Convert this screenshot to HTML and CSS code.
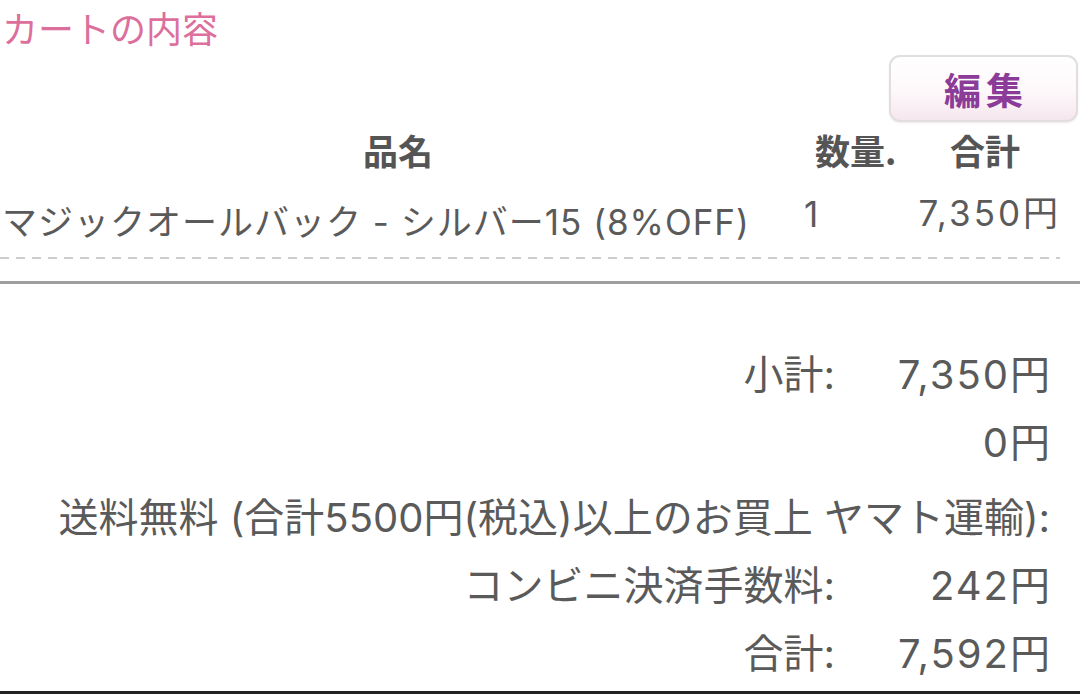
FILE: index.html
```html
<!DOCTYPE html>
<html lang="ja">
<head>
<meta charset="utf-8">
<title>カートの内容</title>
<link rel="stylesheet" href="styles.css">
</head>
<body>
<div class="page">
  <h1 class="title">カートの内容</h1>
  <div class="toolbar"><button class="edit-btn">編集</button></div>
  <div class="cart-head">
    <span class="c-name">品名</span>
    <span class="c-qty">数量.</span>
    <span class="c-total">合計</span>
  </div>
  <div class="cart-row">
    <span class="c-name">マジックオールバック - シルバー15 (8%OFF)</span>
    <span class="c-qty">1</span>
    <span class="c-total">7,350円</span>
  </div>
  <div class="rule"></div>
  <div class="summary">
    <div class="s-row"><span class="s-label">小計:</span><span class="s-value">7,350円</span></div>
    <div class="s-row"><span class="s-label"></span><span class="s-value">0円</span></div>
    <div class="s-row s-wide"><span class="s-label">送料無料 (合計5500円(税込)以上のお買上 ヤマト運輸):</span></div>
    <div class="s-row"><span class="s-label">コンビニ決済手数料:</span><span class="s-value">242円</span></div>
    <div class="s-row"><span class="s-label">合計:</span><span class="s-value">7,592円</span></div>
  </div>
  <div class="bottom-rule"></div>
</div>
</body>
</html>
```
FILE: styles.css
```css
html, body {
  margin: 0;
  padding: 0;
  background: #ffffff;
}
body {
  font-family: Inter, "Noto Sans CJK JP", sans-serif;
  color: #5a5a5a;
  overflow: hidden;
}
.page {
  width: 1080px;
  height: 695px;
  display: flex;
  flex-direction: column;
}
.title {
  margin: 0;
  padding-left: 2px;
  height: 55px;
  line-height: 60px;
  font-size: 36px;
  font-weight: 400;
  color: #dc6f9c;
}
.toolbar {
  height: 67px;
  display: flex;
  justify-content: flex-end;
  padding-right: 2px;
}
.edit-btn {
  width: 189px;
  height: 67px;
  border: 2px solid #e2dde0;
  border-radius: 11px;
  background: linear-gradient(#ffffff 0%, #fdf8fa 55%, #f5e6ee 100%);
  box-shadow: 0 1px 2px rgba(0,0,0,0.08);
  font-family: "Noto Sans CJK JP", sans-serif;
  font-size: 37px;
  font-weight: 700;
  color: #8a3c98;
  letter-spacing: 5px;
  padding: 0 0 0 5px;
}
.cart-head {
  display: grid;
  grid-template-columns: 796px 129px 135px;
  height: 56px;
  line-height: 56px;
  font-size: 35px;
  font-weight: 700;
  font-family: "Noto Sans CJK JP", sans-serif;
  color: #555555;
}
.cart-head .c-name { text-align: center; }
.cart-head .c-qty { text-align: left; padding-left: 19px; }
.cart-head .c-total { text-align: left; padding-left: 25px; }
.cart-row {
  display: grid;
  grid-template-columns: 796px 104px 160px;
  width: 1060px;
  height: 81px;
  font-size: 35px;
  background: repeating-linear-gradient(to right, #cdcdcd 0 9px, transparent 9px 16px) left bottom / 100% 2px no-repeat;
}
.cart-row .c-name {
  padding-left: 2px;
  line-height: 88px;
  white-space: nowrap;
  letter-spacing: 1px;
}
.cart-row .c-qty {
  padding-left: 8px;
  line-height: 72px;
}
.cart-row .c-total {
  text-align: right;
  line-height: 70px;
  white-space: nowrap;
  letter-spacing: 3px;
  margin-right: -1px;
}
.rule {
  margin-top: 22px;
  height: 3px;
  background: #9e9e9e;
}
.summary {
  width: 1050px;
  padding-top: 57px;
  display: flex;
  flex-direction: column;
  font-size: 40px;
}
.s-row {
  height: 68px;
  line-height: 68px;
  display: grid;
  grid-template-columns: 835px 215px;
}
.s-wide {
  margin-top: 7px;
  grid-template-columns: 1050px;
}
.s-label, .s-value {
  text-align: right;
  white-space: nowrap;
}
.s-value {
  letter-spacing: 2px;
  margin-right: -2px;
}
.bottom-rule {
  margin-top: 3px;
  height: 3px;
  background: #222222;
}
```
